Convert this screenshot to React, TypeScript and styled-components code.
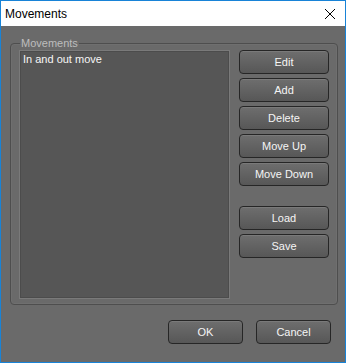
import styled, { createGlobalStyle } from "styled-components"

const GlobalStyle = createGlobalStyle`
    html, body {
        margin: 0;
        padding: 0;
        background: #ffffff;
    }
    * {
        box-sizing: border-box;
    }
`

const Window = styled.div`
    width: 346px;
    height: 363px;
    border: 1px solid #1883d7;
    display: flex;
    flex-direction: column;
    font-family: "Segoe UI", "Liberation Sans", Arial, sans-serif;
`

const TitleBar = styled.div`
    height: 25px;
    background: #ffffff;
    display: flex;
    align-items: center;
    justify-content: space-between;
    padding: 0 9px 0 4px;
    font-size: 12px;
    color: #000000;
`

const CloseIcon = styled.svg`
    width: 12px;
    height: 12px;
    margin-top: 1px;
`

const Body = styled.div`
    flex: 1;
    background: #6a6a6a;
    padding: 10px 7px 0 9px;
    display: flex;
    flex-direction: column;
`

const Group = styled.fieldset`
    margin: 0;
    border: 1px solid #4e4e4e;
    border-radius: 4px;
    box-shadow: inset 0 0 0 1px #6f6f6f;
    padding: 0 8px 5px 8px;
    display: flex;
    gap: 9px;
    min-width: 0;
`

const GroupLabel = styled.legend`
    margin-left: 1px;
    padding: 0 1px;
    font-size: 11px;
    line-height: 14px;
    color: #bdbdbd;
`

const List = styled.div`
    width: 211px;
    height: 249px;
    background: #565656;
    border: 1px solid #7a7a7a;
    box-shadow: inset 0 0 0 1px #4c4c4c;
    padding: 2px 2px;
`

const ListItem = styled.div`
    font-size: 11px;
    line-height: 13px;
    color: #f7f7f7;
    padding-left: 1px;
`

const Side = styled.div`
    display: flex;
    flex-direction: column;
    gap: 4px;
    width: 90px;
`

const Spacer = styled.div`
    height: 12px;
`

const Button = styled.button<{ $wide?: boolean }>`
    width: ${p => (p.$wide ? "90px" : "75px")};
    height: 24px;
    padding: 0;
    border: 1px solid #262626;
    border-radius: 4px;
    background: linear-gradient(#6e6e6e, #575757);
    box-shadow: inset 0 1px 0 #7a7a7a;
    color: #f5f5f5;
    font-family: "Segoe UI", "Liberation Sans", Arial, sans-serif;
    font-size: 11px;
    cursor: default;
`

const Footer = styled.div`
    display: flex;
    justify-content: flex-end;
    gap: 13px;
    margin-top: 15px;
    padding-right: 7px;
`

const sideButtons = ["Edit", "Add", "Delete", "Move Up", "Move Down"]

export default function App() {
    return (
        <>
            <GlobalStyle />
            <Window>
                <TitleBar>
                    <span>Movements</span>
                    <CloseIcon viewBox="0 0 12 12">
                        <path d="M1 1 L11 11 M11 1 L1 11" stroke="#000" strokeWidth="1" fill="none" />
                    </CloseIcon>
                </TitleBar>
                <Body>
                    <Group>
                        <GroupLabel>Movements</GroupLabel>
                        <List>
                            <ListItem>In and out move</ListItem>
                        </List>
                        <Side>
                            {sideButtons.map(label => (
                                <Button key={label} $wide>{label}</Button>
                            ))}
                            <Spacer />
                            <Button $wide>Load</Button>
                            <Button $wide>Save</Button>
                        </Side>
                    </Group>
                    <Footer>
                        <Button>OK</Button>
                        <Button>Cancel</Button>
                    </Footer>
                </Body>
            </Window>
        </>
    )
}
